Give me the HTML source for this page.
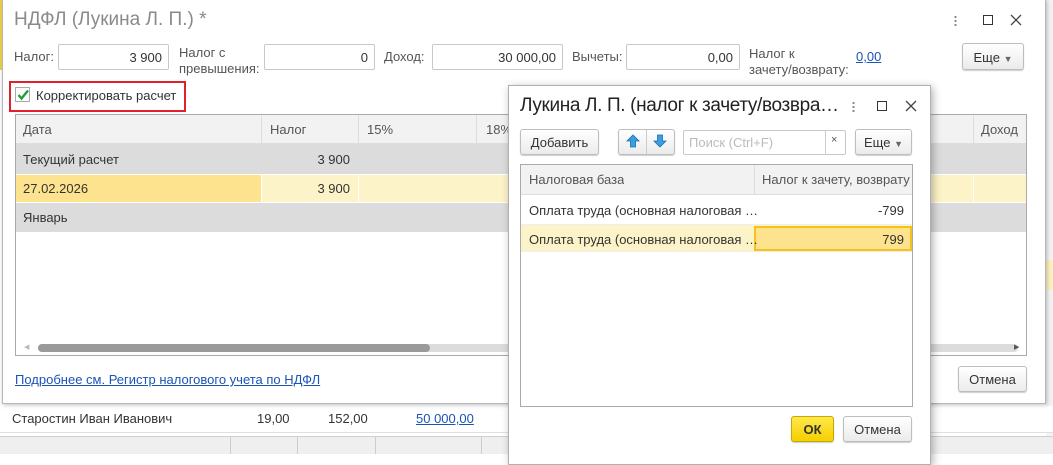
<!DOCTYPE html><html><head><meta charset="utf-8"><style>
*{box-sizing:border-box;margin:0;padding:0}
body{width:1053px;height:454px;position:relative;overflow:hidden;background:#fff;font-family:"Liberation Sans",Arial,sans-serif;font-size:13px;color:#333}
.a{position:absolute}
.in{position:absolute;border:1px solid #c8c8c8;border-radius:2px;background:#fff;height:26px;text-align:right;padding:5px 6px 0 0;color:#333}
.btn{position:absolute;border:1px solid #bdbdbd;border-radius:3px;background:linear-gradient(#fff,#ebebeb);box-shadow:0 1px 1px rgba(0,0,0,.2);text-align:center;color:#333}
.lbl{position:absolute;color:#555}
.cell{position:absolute;white-space:nowrap;overflow:hidden}
a{color:#1a54b5;text-decoration:underline}
.car{font-size:9px;color:#666}
</style></head><body>
<div class="a" style="left:0;top:0;width:3px;height:70px;background:#f0d24a"></div>
<div class="a" style="left:1046px;top:0;width:7px;height:454px;background:#f3f3f3"></div>
<div class="a" style="left:1046px;top:260px;width:7px;height:30px;background:#fdf0c0"></div>
<div class="a" style="left:0;top:406px;width:1053px;height:27px;background:#fff;border-bottom:1px solid #e0e0e0"></div>
<div class="a" style="left:12px;top:411px;color:#333">Старостин Иван Иванович</div>
<div class="a" style="left:257px;top:411px">19,00</div>
<div class="a" style="left:328px;top:411px">152,00</div>
<div class="a" style="left:416px;top:411px"><a>50 000,00</a></div>
<div class="a" style="left:0;top:436px;width:1053px;height:18px;background:#efefef;border-top:1px solid #d0d0d0"></div>
<div class="a" style="left:230px;top:437px;width:1px;height:17px;background:#ccc"></div>
<div class="a" style="left:297px;top:437px;width:1px;height:17px;background:#ccc"></div>
<div class="a" style="left:375px;top:437px;width:1px;height:17px;background:#ccc"></div>
<div class="a" style="left:481px;top:437px;width:1px;height:17px;background:#ccc"></div>

<div class="a" style="left:2px;top:-1px;width:1044px;height:405px;background:#fff;border:1px solid #b8b8b8;box-shadow:1px 1px 4px rgba(0,0,0,.25)"></div>
<div class="a" style="left:14px;top:9px;font-size:19px;color:#8a8a8a">НДФЛ (Лукина Л. П.) *</div>
<div class="a" style="left:954px;top:15px;width:3px;height:12px;background:radial-gradient(circle,#888 1px,transparent 1.3px) 0 0/3px 4px"></div>
<div class="a" style="left:983px;top:15px;width:10px;height:10px;border:1.5px solid #333"></div>
<svg class="a" style="left:1010px;top:14px" width="12" height="12"><path d="M1 1L11 11M11 1L1 11" stroke="#444" stroke-width="1.3"/></svg>
<div class="lbl" style="left:14px;top:49px">Налог:</div>
<div class="in" style="left:58px;top:44px;width:111px">3 900</div>
<div class="lbl" style="left:179px;top:45px;line-height:16px">Налог с<br>превышения:</div>
<div class="in" style="left:264px;top:44px;width:111px">0</div>
<div class="lbl" style="left:384px;top:49px">Доход:</div>
<div class="in" style="left:432px;top:44px;width:131px">30 000,00</div>
<div class="lbl" style="left:572px;top:49px">Вычеты:</div>
<div class="in" style="left:626px;top:44px;width:114px">0,00</div>
<div class="lbl" style="left:749px;top:46px;line-height:16px">Налог к<br>зачету/возврату:</div>
<div class="a" style="left:856px;top:49px"><a>0,00</a></div>
<div class="btn" style="left:962px;top:43px;width:62px;height:27px;padding-top:6px">Еще <span class="car">▼</span></div>
<div class="a" style="left:9px;top:81px;width:177px;height:31px;border:2px solid #e0202a"></div>
<div class="a" style="left:15px;top:87px;width:15px;height:15px;border:1px solid #aaa;background:#fff"></div>
<svg class="a" style="left:16px;top:88px" width="14" height="14"><path d="M2.5 7L5.5 10.5L12 2.5" fill="none" stroke="#1f9e3a" stroke-width="2.4"/></svg>
<div class="a" style="left:36px;top:88px;color:#333">Корректировать расчет</div>
<div class="a" style="left:15px;top:114px;width:1012px;height:242px;border:1px solid #aaa;background:#fff"></div>
<div class="a" style="left:16px;top:115px;width:1010px;height:29px;background:#f2f2f2;border-bottom:1px solid #ddd"></div>
<div class="a" style="left:16px;top:144px;width:1010px;height:30px;background:#dcdcdc"></div>
<div class="a" style="left:16px;top:175px;width:1010px;height:27px;background:#fdf3c8"></div>
<div class="a" style="left:16px;top:175px;width:245px;height:27px;background:#fde38d"></div>
<div class="a" style="left:16px;top:203px;width:1010px;height:29px;background:#dcdcdc"></div>
<div class="a" style="left:261px;top:115px;width:1px;height:29px;background:#ddd"></div>
<div class="a" style="left:358px;top:115px;width:1px;height:29px;background:#ddd"></div>
<div class="a" style="left:476px;top:115px;width:1px;height:29px;background:#ddd"></div>
<div class="a" style="left:973px;top:115px;width:1px;height:29px;background:#ddd"></div>
<div class="a" style="left:261px;top:175px;width:1px;height:27px;background:#fff"></div>
<div class="a" style="left:358px;top:175px;width:1px;height:27px;background:#fff"></div>
<div class="a" style="left:973px;top:175px;width:1px;height:27px;background:#fff"></div>
<div class="cell" style="left:23px;top:122px;color:#555">Дата</div>
<div class="cell" style="left:270px;top:122px;color:#555">Налог</div>
<div class="cell" style="left:367px;top:122px;color:#555">15%</div>
<div class="cell" style="left:486px;top:122px;color:#555">18%</div>
<div class="cell" style="left:981px;top:122px;color:#555">Доход</div>
<div class="cell" style="left:23px;top:152px">Текущий расчет</div>
<div class="cell" style="left:300px;top:152px;width:50px;text-align:right">3 900</div>
<div class="cell" style="left:23px;top:181px">27.02.2026</div>
<div class="cell" style="left:300px;top:181px;width:50px;text-align:right">3 900</div>
<div class="cell" style="left:23px;top:210px">Январь</div>
<div class="a" style="left:38px;top:344px;width:980px;height:8px;border-radius:4px;background:#dcdcdc"></div>
<div class="a" style="left:38px;top:344px;width:392px;height:8px;border-radius:4px;background:#9a9a9a"></div>
<div class="a" style="left:24px;top:343px;font-size:7px;color:#bbb">◀</div>
<div class="a" style="left:1014px;top:343px;font-size:7px;color:#555">▶</div>
<div class="a" style="left:15px;top:372px"><a>Подробнее см. Регистр налогового учета по НДФЛ</a></div>
<div class="btn" style="left:958px;top:366px;width:69px;height:26px;padding-top:5px">Отмена</div>

<div class="a" style="left:508px;top:85px;width:423px;height:380px;background:#fff;border:1px solid #b0b0b0;box-shadow:2px 2px 8px rgba(0,0,0,.3)"></div>
<div class="a" style="left:520px;top:95px;font-size:19px;color:#222;letter-spacing:-0.35px">Лукина Л. П. (налог к зачету/возвра…</div>
<div class="a" style="left:852px;top:101px;width:3px;height:12px;background:radial-gradient(circle,#888 1px,transparent 1.3px) 0 0/3px 4px"></div>
<div class="a" style="left:877px;top:101px;width:10px;height:10px;border:1.5px solid #333"></div>
<svg class="a" style="left:905px;top:100px" width="12" height="12"><path d="M1 1L11 11M11 1L1 11" stroke="#444" stroke-width="1.3"/></svg>
<div class="btn" style="left:520px;top:129px;width:79px;height:26px;padding-top:5px">Добавить</div>
<div class="btn" style="left:618px;top:129px;width:57px;height:26px"></div>
<div class="a" style="left:646px;top:130px;width:1px;height:24px;background:#ccc"></div>
<svg class="a" style="left:625px;top:133px" width="16" height="16" viewBox="0 0 16 16"><path d="M8 2 L14 8 H10.5 V14 H5.5 V8 H2 Z" fill="#3a9ee0" stroke="#1d6fb0" stroke-width=".8"/></svg>
<svg class="a" style="left:652px;top:133px" width="16" height="16" viewBox="0 0 16 16"><path d="M8 14 L14 8 H10.5 V2 H5.5 V8 H2 Z" fill="#3a9ee0" stroke="#1d6fb0" stroke-width=".8"/></svg>
<div class="a" style="left:683px;top:130px;width:163px;height:25px;border:1px solid #c8c8c8;border-radius:2px"></div>
<div class="a" style="left:825px;top:131px;width:1px;height:23px;background:#ccc"></div>
<div class="a" style="left:689px;top:135px;color:#bbb">Поиск (Ctrl+F)</div>
<div class="a" style="left:831px;top:134px;font-size:11px;color:#555">×</div>
<div class="btn" style="left:855px;top:129px;width:57px;height:26px;padding-top:5px">Еще <span class="car">▼</span></div>
<div class="a" style="left:520px;top:164px;width:393px;height:243px;border:1px solid #aaa"></div>
<div class="a" style="left:521px;top:165px;width:391px;height:30px;background:#f2f2f2;border-bottom:1px solid #ddd"></div>
<div class="a" style="left:754px;top:165px;width:1px;height:30px;background:#ddd"></div>
<div class="cell" style="left:529px;top:172px;color:#555">Налоговая база</div>
<div class="cell" style="left:762px;top:172px;color:#555">Налог к зачету, возврату</div>
<div class="a" style="left:521px;top:224px;width:391px;height:1px;background:#eee"></div>
<div class="cell" style="left:529px;top:203px">Оплата труда (основная налоговая …</div>
<div class="cell" style="left:860px;top:203px;width:44px;text-align:right">-799</div>
<div class="a" style="left:521px;top:225px;width:391px;height:27px;background:#fdf3c8;border-bottom:1px solid #eee"></div>
<div class="a" style="left:754px;top:226px;width:158px;height:25px;background:#fde38d;border:2px solid #f5c21a"></div>
<div class="cell" style="left:529px;top:232px">Оплата труда (основная налоговая …</div>
<div class="cell" style="left:860px;top:232px;width:44px;text-align:right">799</div>
<div class="btn" style="left:791px;top:416px;width:43px;height:26px;padding-top:5px;background:linear-gradient(#ffe84a,#f5d000);border-color:#c9a800;font-weight:bold">ОК</div>
<div class="btn" style="left:843px;top:416px;width:69px;height:26px;padding-top:5px">Отмена</div>
</body></html>
